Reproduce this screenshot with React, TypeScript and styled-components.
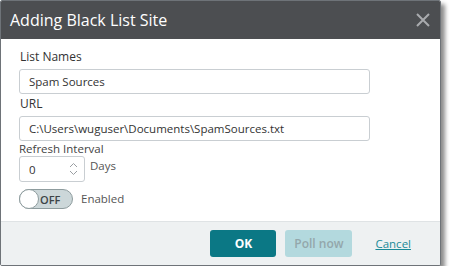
import React, { useState } from "react"
import styled, { createGlobalStyle } from "styled-components"

const GlobalStyle = createGlobalStyle`
  html, body {
    margin: 0;
    padding: 0;
    background: #ffffff;
    overflow: hidden;
  }
  body {
    font-family: "Open Sans", "Noto Sans", sans-serif;
  }
`

const App: React.FC = () => {
  const [listName, setListName] = useState("Spam Sources")
  const [url, setUrl] = useState("C:\\Users\\wuguser\\Documents\\SpamSources.txt")
  const [interval, setIntervalValue] = useState("0")

  return (
    <>
      <GlobalStyle />
      <Dialog>
        <Header>
          <Title>Adding Black List Site</Title>
          <CloseButton aria-label="Close">
            <svg width="14" height="14" viewBox="0 0 14 14">
              <path d="M1 1 L13 13 M13 1 L1 13" stroke="#a9abae" strokeWidth="2" fill="none" />
            </svg>
          </CloseButton>
        </Header>
        <Body>
          <Label>List Names</Label>
          <TextInput value={listName} onChange={(e) => setListName(e.target.value)} />
          <Label $gap={2}>URL</Label>
          <TextInput value={url} onChange={(e) => setUrl(e.target.value)} />
          <SmallLabel>Refresh Interval</SmallLabel>
          <Row>
            <Spinner>
              <SpinnerValue value={interval} onChange={(e) => setIntervalValue(e.target.value)} />
              <SpinnerArrows>
                <svg width="9" height="14" viewBox="0 0 9 14">
                  <path d="M1 5 L4.5 1.5 L8 5 M1 9 L4.5 12.5 L8 9" stroke="#9a9ea2" strokeWidth="1" fill="none" />
                </svg>
              </SpinnerArrows>
            </Spinner>
            <Hint>Days</Hint>
          </Row>
          <ToggleRow>
            <Toggle>
              <Knob />
              <ToggleText>OFF</ToggleText>
            </Toggle>
            <Hint>Enabled</Hint>
          </ToggleRow>
        </Body>
        <Footer>
          <PrimaryButton>OK</PrimaryButton>
          <DisabledButton disabled>Poll now</DisabledButton>
          <LinkButton href="#">Cancel</LinkButton>
        </Footer>
      </Dialog>
    </>
  )
}

const Dialog = styled.div`
  width: 441px;
  height: 266px;
  box-sizing: border-box;
  border: 1px solid #6e7378;
  border-radius: 2px;
  background: #ffffff;
  box-shadow: 4px 4px 4px rgba(0, 0, 0, 0.45);
  display: flex;
  flex-direction: column;
  overflow: hidden;
`

const Header = styled.div`
  height: 38px;
  flex: none;
  background: #4c4e51;
  display: flex;
  align-items: center;
  justify-content: space-between;
  padding: 0 10px 0 9px;
`

const Title = styled.h1`
  margin: 0;
  font-size: 16px;
  font-weight: 400;
  color: #ffffff;
`

const CloseButton = styled.button`
  border: none;
  background: none;
  padding: 0;
  display: flex;
  cursor: pointer;
`

const Body = styled.div`
  flex: 1;
  padding: 10px 0 0 18px;
  display: flex;
  flex-direction: column;
  align-items: flex-start;
`

const Label = styled.label<{ $gap?: number }>`
  font-size: 12px;
  color: #333333;
  line-height: 16px;
  margin-top: ${({ $gap }) => ($gap ? `${$gap}px` : "0")};
  margin-bottom: 4px;
  margin-left: 1px;
`

const SmallLabel = styled.label`
  font-size: 11.5px;
  color: #444444;
  line-height: 14px;
  margin-top: 1px;
  margin-bottom: 0;
`

const TextInput = styled.input`
  width: 351px;
  height: 25px;
  box-sizing: border-box;
  border: 1px solid #c9ced2;
  border-radius: 3px;
  padding: 0 9px;
  font-family: "Open Sans", "Noto Sans", sans-serif;
  font-size: 11.5px;
  color: #333333;
  outline: none;
`

const Row = styled.div`
  display: flex;
  align-items: center;
  gap: 5px;
`

const Spinner = styled.div`
  width: 66px;
  height: 26px;
  box-sizing: border-box;
  border: 1px solid #c9ced2;
  border-radius: 3px;
  display: flex;
  align-items: center;
  padding: 0 6px 0 9px;
`

const SpinnerValue = styled.input`
  width: 30px;
  border: none;
  outline: none;
  padding: 0;
  font-family: "Open Sans", "Noto Sans", sans-serif;
  font-size: 11.5px;
  color: #333333;
  flex: 1;
`

const SpinnerArrows = styled.span`
  display: flex;
`

const Hint = styled.span`
  font-size: 11.5px;
  color: #555555;
  align-self: flex-start;
  margin-top: 2px;
`

const ToggleRow = styled.div`
  display: flex;
  align-items: flex-start;
  gap: 8px;
  margin-top: 7px;
`

const Toggle = styled.div`
  position: relative;
  width: 54px;
  height: 20px;
  box-sizing: border-box;
  border: 1px solid #8e9c9e;
  border-radius: 10px;
  background: #ccd7d9;
  display: flex;
  align-items: center;
  padding-left: 17px;
`

const Knob = styled.span`
  position: absolute;
  left: -1px;
  top: -1px;
  width: 20px;
  height: 20px;
  box-sizing: border-box;
  border-radius: 50%;
  background: #ffffff;
  border: 1px solid #8e9c9e;
`

const ToggleText = styled.span`
  font-size: 11px;
  font-weight: 600;
  color: #3c4446;
  margin-left: 3px;
`

const Footer = styled.div`
  height: 43px;
  flex: none;
  background: #eef1f2;
  border-top: 1px solid #dfe3e5;
  display: flex;
  align-items: center;
  justify-content: flex-end;
  padding: 0 29px 0 0;
  gap: 9px;
`

const PrimaryButton = styled.button`
  width: 66px;
  height: 27px;
  border: none;
  border-radius: 3px;
  background: #0b7885;
  color: #ffffff;
  font-family: "Open Sans", "Noto Sans", sans-serif;
  font-size: 12px;
  font-weight: 700;
  cursor: pointer;
`

const DisabledButton = styled.button`
  width: 67px;
  height: 27px;
  border: none;
  border-radius: 3px;
  background: #b3d9de;
  color: #94a7ab;
  font-family: "Open Sans", "Noto Sans", sans-serif;
  font-size: 12px;
  font-weight: 600;
`

const LinkButton = styled.a`
  margin-left: 14px;
  font-size: 11.5px;
  color: #1a8a98;
  text-decoration: underline;
`

export default App
